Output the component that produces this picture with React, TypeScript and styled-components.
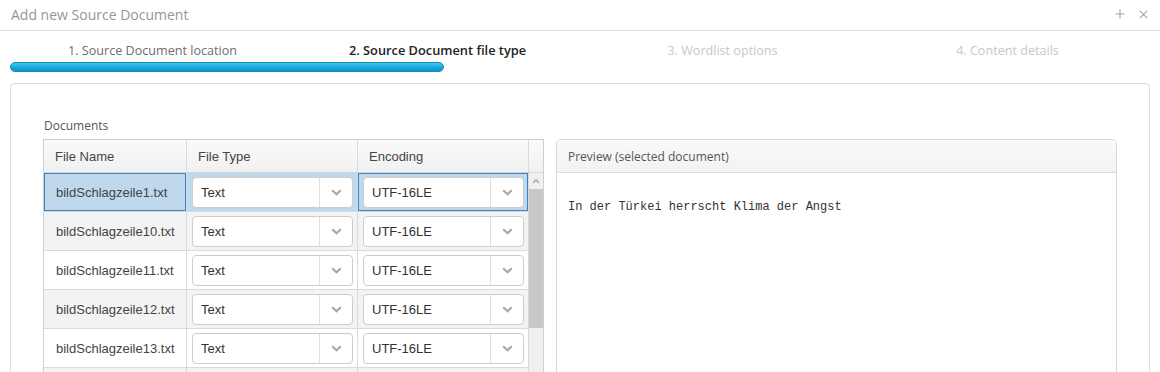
import React from "react";
import styled, { createGlobalStyle } from "styled-components";

const GlobalStyle = createGlobalStyle`
  html, body {
    margin: 0;
    padding: 0;
    background: #fff;
    font-family: "Open Sans", "Liberation Sans", sans-serif;
  }
  * { box-sizing: border-box; }
`;

const Dialog = styled.div`
  width: 1160px;
  height: 372px;
  overflow: hidden;
  display: flex;
  flex-direction: column;
  background: #fff;
`;

const TitleBar = styled.div`
  height: 31px;
  flex: none;
  display: flex;
  align-items: center;
  justify-content: space-between;
  padding: 0 10px 2px 11px;
  border-bottom: 1px solid #e2e2e2;
`;

const Title = styled.div`
  font-size: 14px;
  color: #969696;
`;

const TitleTools = styled.div`
  display: flex;
  align-items: center;
  gap: 14px;
  padding-right: 2px;
`;

const Steps = styled.div`
  display: grid;
  grid-template-columns: repeat(4, 1fr);
  height: 31px;
  padding: 0 10px;
  align-items: center;
  flex: none;
`;

const Step = styled.div<{ $state: "done" | "active" | "todo" }>`
  text-align: center;
  font-size: ${(p) => (p.$state === "active" ? "12.8px" : "12.6px")};
  padding-top: 7px;
  font-weight: ${(p) => (p.$state === "active" ? 600 : 400)};
  color: ${(p) =>
    p.$state === "active" ? "#222" : p.$state === "done" ? "#6d6d6d" : "#c8c8c8"};
`;

const Track = styled.div`
  height: 10px;
  margin: 0 10px;
  flex: none;
`;

const Bar = styled.div`
  height: 10px;
  border-radius: 5px;
  border: 1px solid #1b86b8;
  background: linear-gradient(#3fc6f0, #14a6dc 60%, #0e93c9);
`;

const Panel = styled.div`
  margin: 11px 10px 0;
  border: 1px solid #dcdcdc;
  border-radius: 4px;
  padding: 34px 32px 0 33px;
  min-height: 420px;
  flex: none;
  display: grid;
  grid-template-columns: 500px 561px;
  grid-template-rows: auto auto;
  align-content: start;
  column-gap: 12px;
  row-gap: 5px;
  align-items: start;
`;

const SectionLabel = styled.div`
  grid-column: 1 / 3;
  font-size: 12px;
  line-height: 16px;
  color: #555;
`;

const TableBox = styled.div`
  border: 1px solid #cfcfcf;
  border-bottom: none;
  margin-left: -1px;
  width: 501px;
  font-family: "Liberation Sans", Arial, sans-serif;
  font-size: 13px;
  color: #444;
`;

const HeaderRow = styled.div`
  display: grid;
  grid-template-columns: 143px 171px 171px 14px;
  height: 33px;
  background: linear-gradient(#fafafa, #f1f1f1);
  border-bottom: 1px solid #d4d4d4;
`;

const HeaderCell = styled.div<{ $last?: boolean }>`
  display: flex;
  align-items: center;
  padding-left: 11px;
  border-right: ${(p) => (p.$last ? "none" : "1px solid #dadada")};
`;

const Body = styled.div`
  display: flex;
`;

const Rows = styled.div`
  width: 485px;
`;

const Row = styled.div<{ $tone: "selected" | "odd" | "even" }>`
  display: grid;
  grid-template-columns: 143px 171px 171px;
  height: 39px;
  background: ${(p) =>
    p.$tone === "selected" ? "#bed8ee" : p.$tone === "odd" ? "#f3f3f3" : "#fff"};
`;

const Cell = styled.div<{ $selected?: boolean }>`
  display: flex;
  align-items: center;
  border-right: 1px solid #dadada;
  border-bottom: 1px solid #dadada;
  ${(p) => (p.$selected ? "box-shadow: inset 0 0 0 1px #3f80c2;" : "")}
`;

const NameCell = styled(Cell)`
  padding-left: 12px;
  white-space: nowrap;
`;

const SelectBox = styled.div`
  flex: 1;
  margin: 0 4px 0 5px;
  height: 31px;
  border: 1px solid #cdcdcd;
  border-radius: 4px;
  background: #fff;
  display: flex;
  align-items: stretch;
`;

const SelectValue = styled.div`
  flex: 1;
  display: flex;
  align-items: center;
  padding-left: 8px;
  color: #333;
`;

const SelectArrow = styled.div`
  width: 33px;
  border-left: 1px solid #e0e0e0;
  display: flex;
  align-items: center;
  justify-content: center;
`;

const ScrollTrack = styled.div`
  width: 14px;
  background: #f0f0f0;
  display: flex;
  flex-direction: column;
`;

const ScrollButton = styled.div`
  height: 16px;
  display: flex;
  align-items: center;
  justify-content: center;
`;

const ScrollThumb = styled.div<{ $h: number }>`
  height: ${(p) => p.$h}px;
  background: #c8c8c8;
`;

const Preview = styled.div`
  border: 1px solid #d8d8d8;
  border-radius: 4px 4px 0 0;
  min-height: 320px;
`;

const PreviewHeader = styled.div`
  height: 33px;
  display: flex;
  align-items: center;
  padding-left: 11px;
  font-size: 12px;
  color: #555;
  background: linear-gradient(#fafafa, #f2f2f2);
  border-bottom: 1px solid #dadada;
`;

const PreviewText = styled.pre`
  margin: 0;
  padding: 26px 11px;
  font-family: "Liberation Mono", "Courier New", monospace;
  font-size: 12px;
  line-height: 16px;
  color: #333;
`;

const Chevron = () => (
  <svg width="11" height="7" viewBox="0 0 11 7">
    <polyline points="1.2,1.2 5.5,5.2 9.8,1.2" fill="none" stroke="#a8a8a8" strokeWidth="2.2" />
  </svg>
);

const ChevronUp = () => (
  <svg width="8" height="5" viewBox="0 0 8 5">
    <polyline points="1,4 4,1 7,4" fill="none" stroke="#a0a0a0" strokeWidth="1.3" />
  </svg>
);

const Select = ({ value }: { value: string }) => (
  <SelectBox>
    <SelectValue>{value}</SelectValue>
    <SelectArrow>
      <Chevron />
    </SelectArrow>
  </SelectBox>
);

const docs = [
  "bildSchlagzeile1.txt",
  "bildSchlagzeile10.txt",
  "bildSchlagzeile11.txt",
  "bildSchlagzeile12.txt",
  "bildSchlagzeile13.txt",
  "bildSchlagzeile14.txt",
  "bildSchlagzeile15.txt",
];

export default function App() {
  return (
    <Dialog>
      <GlobalStyle />
      <TitleBar>
        <Title>Add new Source Document</Title>
        <TitleTools>
          <svg width="10" height="10" viewBox="0 0 10 10">
            <path d="M5 0.5V9.5M0.5 5H9.5" stroke="#a3a3a3" strokeWidth="1.1" />
          </svg>
          <svg width="9" height="9" viewBox="0 0 9 9">
            <path d="M0.8 0.8L8.2 8.2M8.2 0.8L0.8 8.2" stroke="#a3a3a3" strokeWidth="1.1" />
          </svg>
        </TitleTools>
      </TitleBar>

      <Steps>
        <Step $state="done">1. Source Document location</Step>
        <Step $state="active">2. Source Document file type</Step>
        <Step $state="todo">3. Wordlist options</Step>
        <Step $state="todo">4. Content details</Step>
      </Steps>

      <Track>
        <Bar style={{ width: `${(434 / 1140) * 100}%` }} />
      </Track>

      <Panel>
        <SectionLabel>Documents</SectionLabel>
        <TableBox>
          <HeaderRow>
            <HeaderCell>File Name</HeaderCell>
            <HeaderCell>File Type</HeaderCell>
            <HeaderCell>Encoding</HeaderCell>
            <HeaderCell $last />
          </HeaderRow>
          <Body>
            <Rows>
              {docs.map((name, i) => {
                const selected = i === 0;
                const tone = selected ? "selected" : i % 2 === 1 ? "odd" : "even";
                return (
                  <Row key={name} $tone={tone}>
                    <NameCell $selected={selected}>{name}</NameCell>
                    <Cell>
                      <Select value="Text" />
                    </Cell>
                    <Cell $selected={selected}>
                      <Select value="UTF-16LE" />
                    </Cell>
                  </Row>
                );
              })}
            </Rows>
            <ScrollTrack>
              <ScrollButton>
                <ChevronUp />
              </ScrollButton>
              <ScrollThumb $h={139} />
            </ScrollTrack>
          </Body>
        </TableBox>

        <Preview>
          <PreviewHeader>Preview (selected document)</PreviewHeader>
          <PreviewText>In der Türkei herrscht Klima der Angst</PreviewText>
        </Preview>
      </Panel>
    </Dialog>
  );
}
